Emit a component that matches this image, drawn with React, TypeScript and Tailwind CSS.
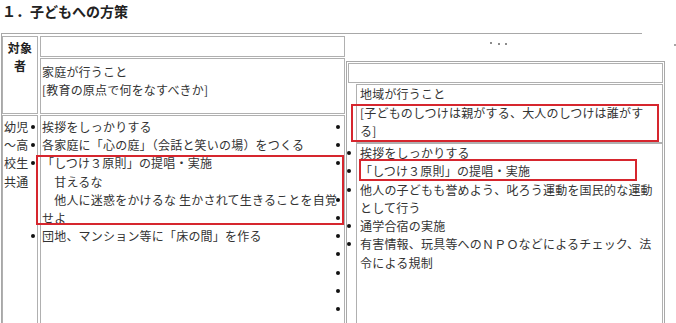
import React from "react";

const leftItems: { text: string; bullet: boolean; sideBullet: boolean }[] = [
  { text: "挨拶をしっかりする", bullet: true, sideBullet: true },
  { text: "各家庭に「心の庭」（会話と笑いの場）をつくる", bullet: true, sideBullet: true },
  { text: "「しつけ３原則」の提唱・実施", bullet: true, sideBullet: true },
  { text: "　甘えるな", bullet: false, sideBullet: false },
  { text: "　他人に迷惑をかけるな 生かされて生きることを自覚", bullet: true, sideBullet: false },
  { text: "せよ", bullet: true, sideBullet: false },
  { text: "団地、マンション等に「床の間」を作る", bullet: true, sideBullet: true },
  { text: "", bullet: true, sideBullet: false },
  { text: "", bullet: true, sideBullet: false },
  { text: "", bullet: true, sideBullet: false },
  { text: "", bullet: true, sideBullet: false },
];

const targetLines = ["幼児", "～高", "校生", "共通", "", "", ""];

const rightItems: string[][] = [
  ["挨拶をしっかりする"],
  ["「しつけ３原則」の提唱・実施"],
  ["他人の子どもも誉めよう、叱ろう運動を国民的な運動", "として行う"],
  ["通学合宿の実施"],
  ["有害情報、玩具等へのＮＰＯなどによるチェック、法", "令による規制"],
];

const Dot = () => <span className="block h-[4px] w-[4px] rounded-full bg-[#111]" />;

export default function App() {
  return (
    <div
      className="relative h-[323px] w-[676px] overflow-hidden bg-white text-[#333]"
      style={{ fontFamily: '"Noto Sans CJK JP", "Noto Sans", sans-serif' }}
    >
      <div className="h-[33px] pl-[2px] pt-[3px] text-[14px] font-bold leading-[16px] text-[#222]">
        １．子どもへの方策
      </div>

      <div className="ml-[1px] w-[641px] border-t border-[#a8a8a8] text-[12px] tracking-[0.2px]">
        <div className="flex items-start">
          {/* left table */}
          <div className="w-[344px] shrink-0 border-l border-[#a8a8a8] pt-[2px]">
            <div className="flex gap-[2px]">
              <div className="h-[78px] w-[36px] border border-[#b0b0b0] pt-[2px] text-center font-bold leading-[18px] text-[#222]">
                <div>対象</div>
                <div>者</div>
              </div>
              <div className="flex w-[305px] flex-col gap-[1px]">
                <div className="h-[21px] border border-[#b0b0b0]" />
                <div className="h-[56px] border border-[#b0b0b0] pl-[1px] pt-[4px] leading-[18px]">
                  <div>家庭が行うこと</div>
                  <div>[教育の原点で何をなすべきか]</div>
                </div>
              </div>
            </div>

            <div className="mt-[1px] flex gap-[2px]">
              <div className="h-[220px] w-[36px] border border-[#b0b0b0] pl-[1px] pr-[2px] pt-[2px]">
                {targetLines.map((t, i) => (
                  <div key={i} className="flex h-[18.2px] items-center justify-between">
                    <span className="leading-[18px]">{t}</span>
                    {(i < 3 || i === 6) && <Dot />}
                  </div>
                ))}
              </div>
              <div className="h-[220px] w-[305px] border border-[#b0b0b0] pl-[1px] pr-[4px] pt-[2px]">
                {leftItems.map((it, i) => (
                  <div key={i} className="relative flex h-[18.2px] items-center whitespace-nowrap">
                    <span className="leading-[18px]">{it.text}</span>
                    {it.bullet && (
                      <span className="absolute right-[0px] top-[7px]">
                        <Dot />
                      </span>
                    )}
                  </div>
                ))}
              </div>
            </div>
          </div>

          {/* right nested table */}
          <div className="ml-[1px] mt-[27px] h-[270px] w-[319px] shrink-0 border border-[#a8a8a8] p-[1px]">
            <div className="h-[20px] border border-[#b0b0b0]" />
            <div className="mt-[1px] flex">
              <div className="w-[8px] shrink-0" />
              <div className="h-[59px] w-[307px] border border-[#b0b0b0] pl-[3px] leading-[18.5px]">
                <div>地域が行うこと</div>
                <div>[子どものしつけは親がする、大人のしつけは誰がす</div>
                <div>る]</div>
              </div>
            </div>
            <div className="flex">
              <div className="w-[8px] shrink-0" />
              <div className="h-[200px] w-[307px] border border-[#b0b0b0] pl-[3px] leading-[18.3px]">
                <ul>
                  {rightItems.map((lines, i) => (
                    <li key={i} className="relative whitespace-nowrap">
                      <span className="absolute left-[-13px] top-[7px]">
                        <Dot />
                      </span>
                      {lines.map((l, j) => (
                        <div key={j}>{l}</div>
                      ))}
                    </li>
                  ))}
                </ul>
              </div>
            </div>
          </div>
        </div>
      </div>

      {/* stray dots */}
      <span className="absolute left-[490px] top-[42px] h-[2px] w-[2px] rounded-full bg-[#666]" />
      <span className="absolute left-[498px] top-[43px] h-[2px] w-[2px] rounded-full bg-[#666]" />
      <span className="absolute left-[505px] top-[43px] h-[2px] w-[2px] rounded-full bg-[#666]" />
      <span className="absolute left-[674px] top-[44px] h-[2px] w-[2px] rounded-full bg-[#888]" />

      {/* red annotation boxes */}
      <div className="absolute left-[36px] top-[155px] h-[70px] w-[308px] border-2 border-[#d6262e]" />
      <div className="absolute left-[351px] top-[104px] h-[38px] w-[308px] border-2 border-[#d6262e]" />
      <div className="absolute left-[359px] top-[159px] h-[22px] w-[278px] border-2 border-[#d6262e]" />
    </div>
  );
}
